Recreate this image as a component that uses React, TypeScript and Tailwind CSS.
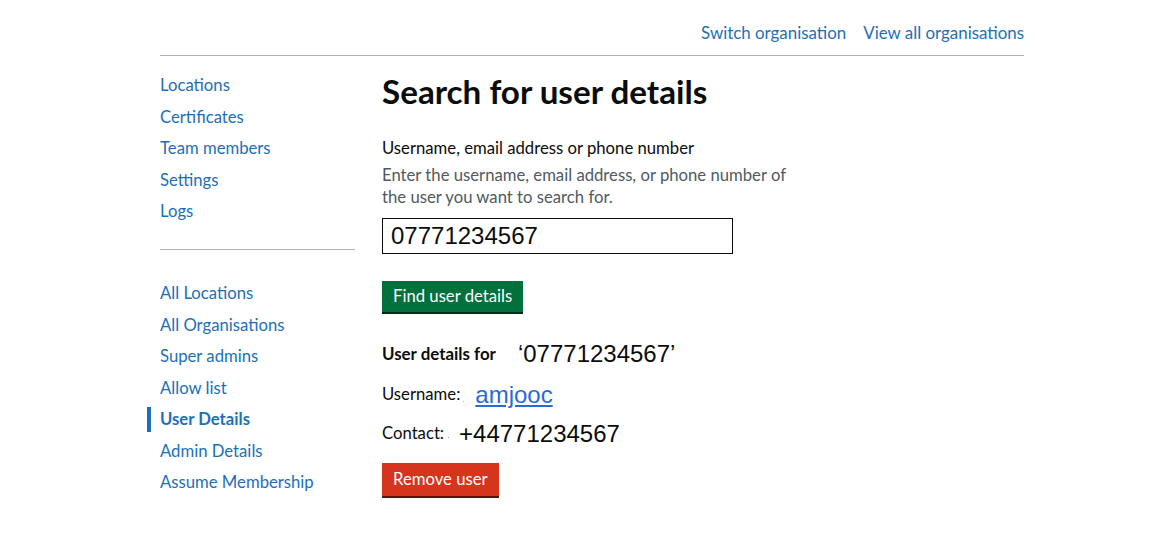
const font = "font-['Lato','Liberation_Sans',sans-serif]";
const mono = "font-['Liberation_Sans',Arial,sans-serif]";

const primaryNav = ['Locations', 'Certificates', 'Team members', 'Settings', 'Logs'];
const adminNav = [
  'All Locations',
  'All Organisations',
  'Super admins',
  'Allow list',
  'User Details',
  'Admin Details',
  'Assume Membership',
];

function NavItem({ label, active }: { label: string; active?: boolean }) {
  if (active) {
    return (
      <li className="-ml-[13px] border-l-4 border-[#1d70b8] pl-[9px]">
        <a href="#" className="block text-[16.7px] font-bold leading-[25px] text-[#1d70b8]">
          {label}
        </a>
      </li>
    );
  }
  return (
    <li>
      <a href="#" className="block text-[16.7px] leading-[25px] text-[#1d70b8]">
        {label}
      </a>
    </li>
  );
}

export default function App() {
  return (
    <div className={`min-h-[536px] bg-white text-[#0b0c0c] ${font}`}>
      <div className="ml-[160px] w-[864px]">
        <div className="flex h-[56px] items-center justify-end gap-[17px] border-b border-[#b1b4b6] pt-[10px]">
          <a href="#" className="text-[16.9px] text-[#1d70b8]">Switch organisation</a>
          <a href="#" className="text-[16.9px] text-[#1d70b8]">View all organisations</a>
        </div>

        <div className="flex">
          <nav className="w-[195px] shrink-0 pt-[17px]">
            <ul className="flex flex-col gap-[6.5px]">
              {primaryNav.map(item => (
                <NavItem key={item} label={item} />
              ))}
            </ul>
            <hr className="mb-[31px] mt-[25px] border-t border-[#b1b4b6]" />
            <ul className="flex flex-col gap-[6.5px]">
              {adminNav.map(item => (
                <NavItem key={item} label={item} active={item === 'User Details'} />
              ))}
            </ul>
          </nav>

          <main className="ml-[27px] w-[420px] pt-[16px]">
            <h1 className="text-[33.2px] font-bold leading-[38px]">Search for user details</h1>

            <label className="mt-[28px] block text-[16.7px] leading-[20px]">
              Username, email address or phone number
            </label>
            <p className="mt-[6px] text-[16.7px] leading-[22px] text-[#505a5f]">
              Enter the username, email address, or phone number of the user you want to search for.
            </p>
            <div className="mt-[10px] flex h-[36px] w-[351px] items-center border border-[#0b0c0c] px-[8px]">
              <span className={`${mono} text-[24px]`}>07771234567</span>
            </div>

            <button className="mt-[27px] block bg-[#00703c] px-[11px] pb-[5px] pt-[5px] text-[16.7px] leading-[21px] text-white shadow-[0_2px_0_#002d18]">
              Find user details
            </button>

            <div className="mt-[28px] flex h-[28px] items-center">
              <span className="text-[16.9px] font-bold">User details for</span>
              <span className={`ml-[22px] ${mono} text-[24px] leading-[28px]`}>‘07771234567’</span>
            </div>

            <div className="mt-[13px] flex h-[28px] items-center">
              <span className="text-[16.7px]">Username:</span>
              <span className="ml-[3px] mt-[12px] h-[1px] w-[1px] bg-[#9bb8e6]" />
              <a href="#" className={`ml-[11px] ${mono} text-[24px] leading-[28px] text-[#2a6ad8] underline`}>
                amjooc
              </a>
            </div>

            <div className="mt-[11px] flex h-[28px] items-center">
              <span className="text-[16.7px]">Contact:</span>
              <span className="ml-[4px] mt-[6px] h-[1px] w-[1px] bg-[#9a9a9a]" />
              <span className={`ml-[10px] ${mono} text-[24px] leading-[28px]`}>+44771234567</span>
            </div>

            <button className="mt-[15px] block bg-[#d4351c] px-[11px] pb-[6px] pt-[6px] text-[16.7px] leading-[21px] text-white shadow-[0_2px_0_#55150b]">
              Remove user
            </button>
          </main>
        </div>
      </div>
    </div>
  );
}
